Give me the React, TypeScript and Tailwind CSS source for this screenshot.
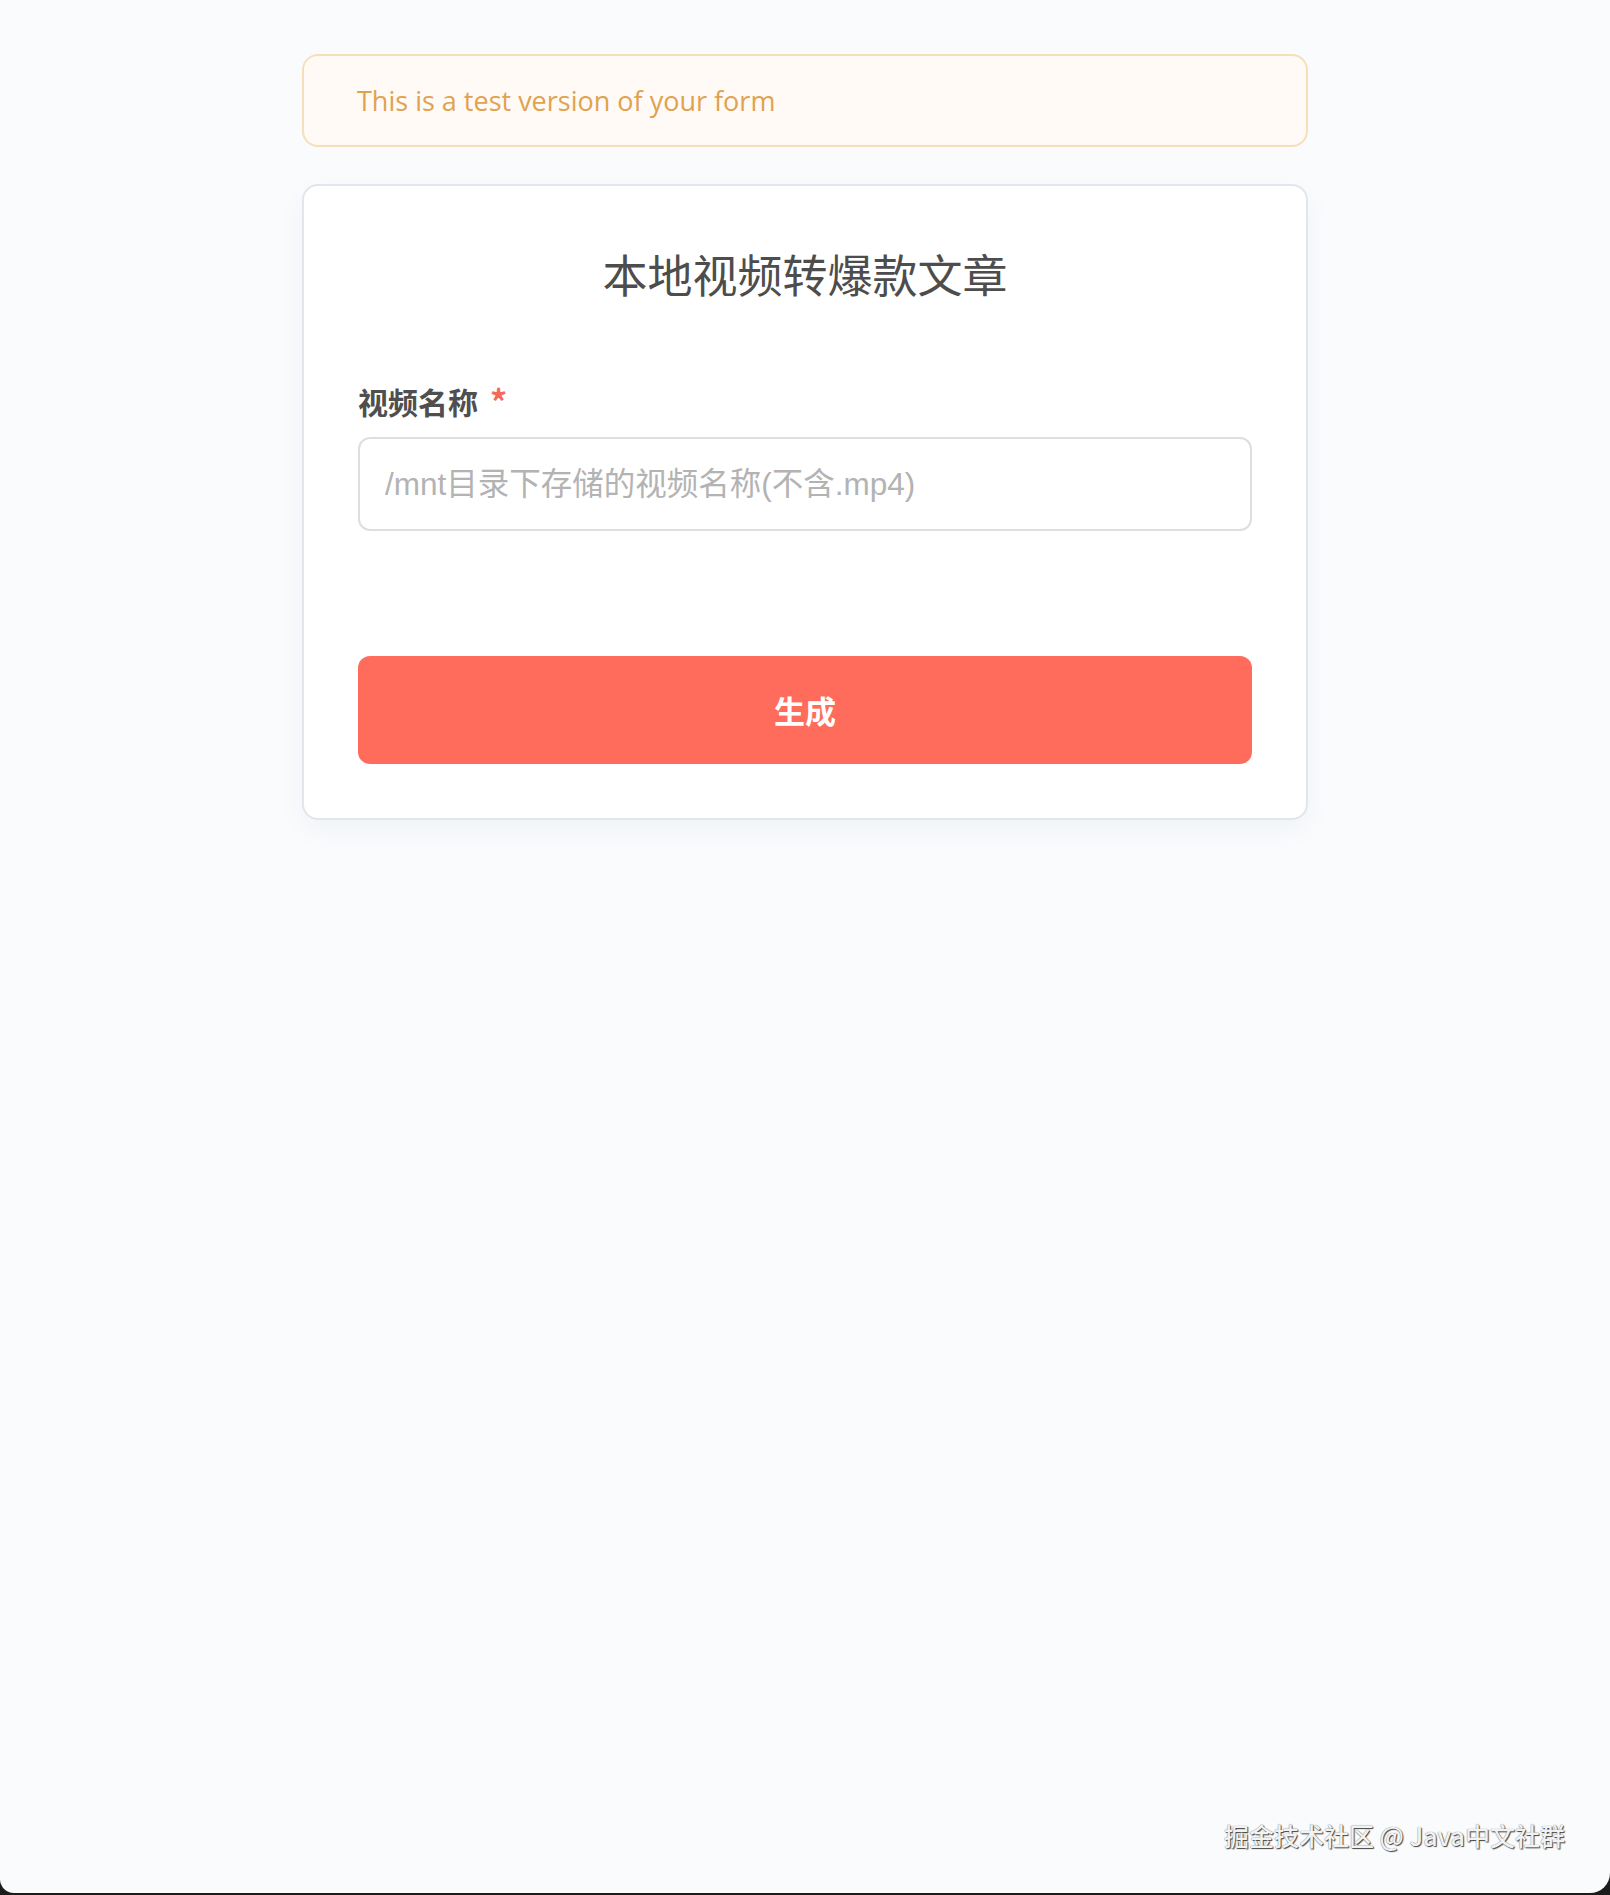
import { useState, type FormEvent } from "react";

const CJK = "font-['Noto_Sans_CJK_SC',sans-serif]";

export default function App() {
  const [name, setName] = useState("");
  const onSubmit = (e: FormEvent<HTMLFormElement>) => {
    e.preventDefault();
  };

  return (
    <div className="h-[1895px] bg-[#1c1c1c]">
      <div className="relative h-[1893px] rounded-bl-[14px] rounded-br-[20px] bg-[#f9fbfd] pt-[54px]">
        <div className="mx-auto w-[1006px]">
          {/* test banner */}
          <div className="flex h-[93px] items-center rounded-[16px] border-2 border-[#f6dfb9] bg-[#fffaf5] px-[53px] pt-[2px]">
            <p className="font-['Open_Sans',sans-serif] text-[27px] text-[#e1a24f]">
              This is a test version of your form
            </p>
          </div>

          <form
            onSubmit={onSubmit}
            className="mt-[37px] rounded-[16px] border-2 border-[#e2e5eb] bg-white px-[54px] pt-[65px] pb-[54px] shadow-[0_10px_30px_rgba(30,50,90,0.04)]"
          >
            <h1 className={`${CJK} text-center text-[45px] leading-[45px] text-[#4d4d4d]`}>
              本地视频转爆款文章
            </h1>

            <label className={`${CJK} mt-[90px] flex items-center text-[30px] leading-[30px] font-bold text-[#4f4f4f]`}>
              视频名称
              <span className="ml-[12px] text-[34px] text-[#f26b5b]">*</span>
            </label>
            <input
              value={name}
              onChange={(e) => setName(e.target.value)}
              placeholder="/mnt目录下存储的视频名称(不含.mp4)"
              className="mt-[21px] block h-[94px] w-full rounded-[12px] border-2 border-[#dedede] bg-white px-[25px] font-['Liberation_Sans','Noto_Sans_CJK_SC',sans-serif] text-[31.5px] text-[#444] outline-none placeholder:text-[#b3b3b3]"
            />

            <button
              type="submit"
              className={`${CJK} mt-[125px] block h-[108px] w-full rounded-[12px] bg-[#ff6c5c] text-[31px] font-bold text-white`}
            >
              生成
            </button>
          </form>
        </div>

        <div className={`${CJK} absolute right-[45px] bottom-[45px] text-[25px] leading-[25px] font-medium text-[#f2f2f2] [text-shadow:1px_1px_1px_#444,0_0_1px_#666]`}>
          掘金技术社区 @ Java中文社群
        </div>
      </div>
    </div>
  );
}
